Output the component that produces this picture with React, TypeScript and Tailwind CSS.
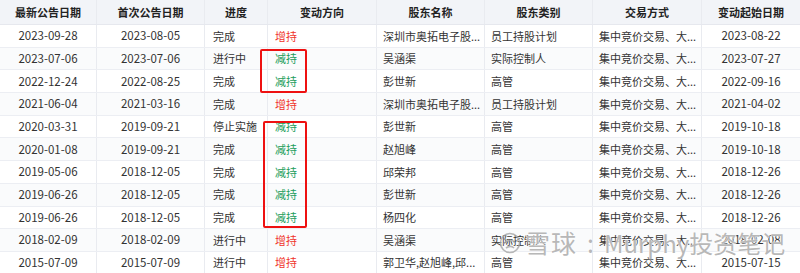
import React from "react";

type Row = {
  latest: string;
  first: string;
  progress: string;
  dir: "增持" | "减持";
  holder: string;
  kind: string;
  method: string;
  start: string;
};

const rows: Row[] = [
  { latest: "2023-09-28", first: "2023-08-05", progress: "完成", dir: "增持", holder: "深圳市奥拓电子股...", kind: "员工持股计划", method: "集中竞价交易、大...", start: "2023-08-22" },
  { latest: "2023-07-06", first: "2023-07-06", progress: "进行中", dir: "减持", holder: "吴涵渠", kind: "实际控制人", method: "集中竞价交易、大...", start: "2023-07-27" },
  { latest: "2022-12-24", first: "2022-08-25", progress: "完成", dir: "减持", holder: "彭世新", kind: "高管", method: "集中竞价交易、大...", start: "2022-09-16" },
  { latest: "2021-06-04", first: "2021-03-16", progress: "完成", dir: "增持", holder: "深圳市奥拓电子股...", kind: "员工持股计划", method: "集中竞价交易、大...", start: "2021-04-02" },
  { latest: "2020-03-31", first: "2019-09-21", progress: "停止实施", dir: "减持", holder: "彭世新", kind: "高管", method: "集中竞价交易、大...", start: "2019-10-18" },
  { latest: "2020-01-08", first: "2019-09-21", progress: "完成", dir: "减持", holder: "赵旭峰", kind: "高管", method: "集中竞价交易、大...", start: "2019-10-18" },
  { latest: "2019-05-06", first: "2018-12-05", progress: "完成", dir: "减持", holder: "邱荣邦", kind: "高管", method: "集中竞价交易、大...", start: "2018-12-26" },
  { latest: "2019-06-26", first: "2018-12-05", progress: "完成", dir: "减持", holder: "彭世新", kind: "高管", method: "集中竞价交易、大...", start: "2018-12-26" },
  { latest: "2019-06-26", first: "2018-12-05", progress: "完成", dir: "减持", holder: "杨四化", kind: "高管", method: "集中竞价交易、大...", start: "2018-12-26" },
  { latest: "2018-02-09", first: "2018-02-09", progress: "进行中", dir: "增持", holder: "吴涵渠", kind: "实际控制人", method: "集中竞价交易、大...", start: "2018-02-08" },
  { latest: "2015-07-09", first: "2015-07-09", progress: "进行中", dir: "增持", holder: "郭卫华,赵旭峰,邱...", kind: "高管", method: "集中竞价交易、大...", start: "2015-07-15" },
];

const headers = ["最新公告日期", "首次公告日期", "进度", "变动方向", "股东名称", "股东类别", "交易方式", "变动起始日期"];

const grid = "grid grid-cols-[97px_108px_63px_109px_108px_108px_109px_98px]";
const cell = "flex items-center border-r border-[#e9ebf0] last:border-r-0 overflow-hidden whitespace-nowrap";

export default function App() {
  return (
    <div
      className="relative w-[800px] h-[273px] overflow-hidden bg-white text-[11px] text-[#333]"
      style={{ fontFamily: '"Noto Sans CJK SC", "Noto Sans", sans-serif' }}
    >
      {/* header */}
      <div className={`${grid} h-[25px] bg-[#f2f4f8] border-b border-[#e6e8ee] font-bold text-[11px] text-[#222]`}>
        {headers.map((h) => (
          <div key={h} className={`${cell} justify-center`}>
            {h}
          </div>
        ))}
      </div>

      {rows.map((r, i) => (
        <div
          key={i}
          className={`${grid} h-[22.7px] border-b border-[#eceef3] ${i % 2 === 1 ? "bg-[#fafbfc]" : "bg-white"}`}
        >
          <div className={`${cell} justify-center text-[11.5px]`}>{r.latest}</div>
          <div className={`${cell} justify-center text-[11.5px]`}>{r.first}</div>
          <div className={`${cell} pl-2`}>{r.progress}</div>
          <div className={`${cell} pl-[7px] ${r.dir === "增持" ? "text-[#f0332a]" : "text-[#1c9d5b]"}`}>{r.dir}</div>
          <div className={`${cell} pl-[6px]`}>{r.holder}</div>
          <div className={`${cell} pl-[6px]`}>{r.kind}</div>
          <div className={`${cell} pl-[6px]`}>{r.method}</div>
          <div className={`${cell} justify-center text-[11.5px]`}>{r.start}</div>
        </div>
      ))}

      {/* red highlight boxes */}
      <div className="absolute left-[260px] top-[49px] w-[47px] h-[44px] border-2 border-[#ee1111] rounded-[2px]" />
      <div className="absolute left-[263px] top-[121px] w-[44px] h-[107px] border-2 border-[#ee1111] rounded-[2px]" />

      {/* watermark */}
      <div className="absolute left-[499px] top-[230px] flex items-center gap-[4px] whitespace-nowrap text-[rgba(165,165,165,0.8)] [text-shadow:0_0_2px_#fff,0_0_1px_#fff] pointer-events-none">
        <svg width="22" height="22" viewBox="0 0 22 22" fill="none" stroke="rgba(165,165,165,0.8)" strokeWidth="1.6">
          <circle cx="11" cy="11" r="9.5" />
          <path d="M5 12c2-4 7-5 11-2M7 16c3-2 6-2 8 0" />
        </svg>
        <span className="text-[25px] leading-none tracking-[1px]">雪球</span>
        <span className="text-[25px] leading-none mx-[6px]">:</span>
        <span className="text-[24px] leading-none">Murphy投资笔记</span>
      </div>
    </div>
  );
}
